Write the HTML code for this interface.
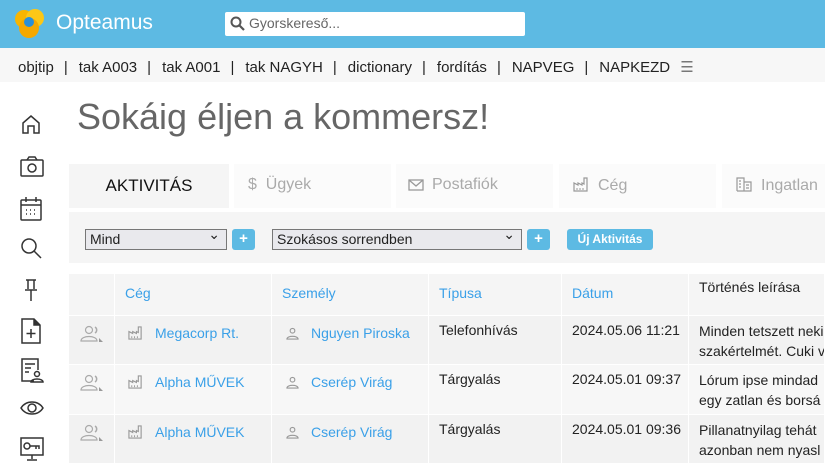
<!DOCTYPE html>
<html><head><meta charset="utf-8"><style>
*{box-sizing:border-box;margin:0;padding:0}
body{width:825px;height:464px;overflow:hidden;background:#fff;font-family:"Liberation Sans",sans-serif;color:#222;position:relative}
.hdr{position:absolute;left:0;top:0;width:825px;height:48px;background:#5dbae3}
.logo{position:absolute;left:12px;top:6px}
.brand{position:absolute;left:56px;top:11px;color:#fff;font-size:21px}
.search{position:absolute;left:225px;top:12px;width:300px;height:24px;background:#fff;border-radius:2px;font-size:14px;color:#666;padding:3px 0 0 24px}
.nav{position:absolute;left:0;top:48px;width:825px;height:34px;background:#f7f7f7;font-size:15px;color:#222;padding:10px 0 0 18px;white-space:nowrap}
.nav span.s{margin:0 11px 0 10px}
.side svg{position:absolute;left:20px}
h1{position:absolute;left:77px;top:96px;font-weight:normal;font-size:36px;color:#666}
.tab{position:absolute;top:164px;height:44px;font-size:16px;color:#aaa;padding-top:12px;background:#fbfbfb}
.fbar{position:absolute;left:69px;top:212px;width:756px;height:51px;background:#f5f5f5}
.sel{position:absolute;top:229px;height:21px;border:1px solid #777;background:#e9e9ed;font-size:14px;padding:1px 0 0 4px}
.sel:after{content:"⌄";position:absolute;right:6px;top:-4px;font-size:14px}
.plus{position:absolute;top:229px;width:23px;height:21px;background:#5dbae3;border-radius:3px;color:#fff;text-align:center;font-size:15px;font-weight:bold;line-height:20px}
.btn{position:absolute;left:567px;top:229px;width:86px;height:21px;background:#5dbae3;border-radius:3px;color:#fff;font-size:12px;font-weight:bold;text-align:center;line-height:21px}
.cell{position:absolute;font-size:14px;border-right:1px solid #fff;border-bottom:1px solid #fff;padding-left:10px}
.blue{color:#3aa0e8}
.d{line-height:20px;white-space:nowrap;overflow:hidden;padding-top:5px}
.ic{display:inline-block;vertical-align:-2px;margin-right:12px}
</style></head><body>
<svg width="0" height="0" style="position:absolute"><defs>
<symbol id="fac" viewBox="0 0 16 16"><path d="M1 15V7L5 9V7L9 9V7L11 8V2H14V15Z" fill="none" stroke="#999" stroke-width="1.2"/><path d="M4 12V14M7 12V14M10 12V14" stroke="#999"/></symbol>
<symbol id="per" viewBox="0 0 14 14"><circle cx="7" cy="4" r="2.5" fill="none" stroke="#999" stroke-width="1.2"/><path d="M1 13C1 9 13 9 13 13Z" fill="none" stroke="#999" stroke-width="1.2"/></symbol>
<symbol id="grp" viewBox="0 0 24 18"><circle cx="9" cy="5" r="3.5" fill="none" stroke="#aaa" stroke-width="1.2"/><path d="M15 2A3.5 3.5 0 0 1 15 8" fill="none" stroke="#aaa" stroke-width="1.5"/><path d="M1 16C1 10 17 10 17 16Z" fill="none" stroke="#aaa" stroke-width="1.2"/><path d="M19 13L23 17H19Z" fill="#999"/></symbol>
</defs></svg>
<div class="hdr">
<svg class="logo" width="36" height="36" viewBox="0 0 36 36"><circle cx="12" cy="13" r="9" fill="#f7b500"/><circle cx="23" cy="12" r="9" fill="#fcc716"/><circle cx="17" cy="22" r="10" fill="#f5a800"/><circle cx="17" cy="16" r="5" fill="#2a8fd8"/></svg>
<div class="brand">Opteamus</div>
<div class="search"><svg style="position:absolute;left:5px;top:4px" width="15" height="15" viewBox="0 0 15 15"><circle cx="6" cy="6" r="4.5" fill="none" stroke="#555" stroke-width="2"/><path d="M9.5 9.5L14 14" stroke="#555" stroke-width="2.2"/></svg>Gyorskereső...</div>
</div>
<div class="nav">objtip<span class="s">|</span>tak A003<span class="s">|</span>tak A001<span class="s">|</span>tak NAGYH<span class="s">|</span>dictionary<span class="s">|</span>fordítás<span class="s">|</span>NAPVEG<span class="s">|</span>NAPKEZD <span style="margin-left:6px;color:#777">☰</span></div>
<div class="side">
<svg style="top:113px" width="22" height="22" viewBox="0 0 22 22" fill="none" stroke="#333" stroke-width="1.5"><path d="M3 10L11 3L19 10V20H14V13H8V20H3Z"/></svg>
<svg style="top:156px" width="24" height="22" viewBox="0 0 24 22" fill="none" stroke="#333" stroke-width="1.5"><rect x="1" y="4" width="22" height="16" rx="1"/><path d="M7 4L9 1H15L17 4"/><circle cx="12" cy="12" r="4"/></svg>
<svg style="top:197px" width="22" height="24" viewBox="0 0 22 24" fill="none" stroke="#333" stroke-width="1.5"><rect x="1" y="3" width="20" height="20" rx="1"/><path d="M1 8H21M6 0V5M16 0V5M6 13h1M10 13h1M14 13h1M6 17h1M10 17h1M14 17h1"/></svg>
<svg style="top:237px" width="22" height="24" viewBox="0 0 22 24" fill="none" stroke="#333" stroke-width="1.5"><circle cx="9" cy="9" r="7"/><path d="M14 14L21 21"/></svg>
<svg style="top:278px" width="22" height="24" viewBox="0 0 22 24" fill="none" stroke="#333" stroke-width="1.5"><path d="M6 2H16M8 2V11M14 2V11M5 12H17M11 12V23"/></svg>
<svg style="top:318px" width="22" height="26" viewBox="0 0 22 26" fill="none" stroke="#333" stroke-width="1.5"><path d="M2 1H14L20 7V25H2Z"/><path d="M14 1V7H20" fill="#333"/><path d="M11 11V20M6.5 15.5H15.5"/></svg>
<svg style="top:358px" width="24" height="26" viewBox="0 0 24 26" fill="none" stroke="#333" stroke-width="1.5"><path d="M14 23H2V1H18V12"/><path d="M5 6H15M5 10H11M5 14H9"/><circle cx="17" cy="16" r="2.5"/><path d="M11 24C11 20 23 20 23 24Z"/></svg>
<svg style="top:398px" width="24" height="20" viewBox="0 0 24 20" fill="none" stroke="#333" stroke-width="1.5"><path d="M1 10C6 2 18 2 23 10C18 18 6 18 1 10Z"/><circle cx="12" cy="10" r="4"/></svg>
<svg style="top:437px" width="24" height="26" viewBox="0 0 24 26" fill="none" stroke="#333" stroke-width="1.5"><rect x="1" y="1" width="22" height="17"/><circle cx="7" cy="9" r="3"/><path d="M10 9H19V12M16 9V12M12 18V22M7 23H17"/></svg>
</div>
<h1>Sokáig éljen a kommersz!</h1>
<div class="tab" style="left:69px;width:160px;background:#f5f5f5;color:#111;text-align:center;font-size:17px">AKTIVITÁS</div>
<div class="tab" style="left:234px;width:157px;padding-left:14px">$&nbsp;&nbsp;Ügyek</div>
<div class="tab" style="left:396px;width:157px;padding-left:12px"><svg class="ic" style="margin-right:8px" width="16" height="12" viewBox="0 0 16 12" fill="none" stroke="#999" stroke-width="1.3"><rect x="1" y="1" width="14" height="10"/><path d="M1 1L8 7L15 1"/></svg>Postafiók</div>
<div class="tab" style="left:559px;width:157px;padding-left:14px"><svg class="ic" style="margin-right:9px" width="16" height="16"><use href="#fac"/></svg>Cég</div>
<div class="tab" style="left:722px;width:103px;padding-left:14px"><svg class="ic" style="margin-right:9px" width="16" height="16" viewBox="0 0 16 16" fill="none" stroke="#999" stroke-width="1.2"><path d="M1 15V2H8V15M8 6H15V15H1M3 5h2M3 8h2M3 11h2M10 9h3M10 12h3"/></svg>Ingatlan</div>
<div class="fbar"></div>
<div class="sel" style="left:85px;width:142px">Mind</div>
<div class="plus" style="left:232px">+</div>
<div class="sel" style="left:272px;width:250px">Szokásos sorrendben</div>
<div class="plus" style="left:527px">+</div>
<div class="btn">Új Aktivitás</div>

<div class="cell" style="left:69px;top:274px;width:46px;height:42px;background:#f5f5f5"></div>
<div class="cell blue" style="left:115px;top:274px;width:157px;height:42px;background:#f5f5f5;padding-top:11px">Cég</div>
<div class="cell blue" style="left:272px;top:274px;width:157px;height:42px;background:#f5f5f5;padding-top:11px">Személy</div>
<div class="cell blue" style="left:429px;top:274px;width:133px;height:42px;background:#f5f5f5;padding-top:11px">Típusa</div>
<div class="cell blue" style="left:562px;top:274px;width:127px;height:42px;background:#f5f5f5;padding-top:11px">Dátum</div>
<div class="cell" style="left:689px;top:274px;width:136px;height:42px;background:#f5f5f5;padding-top:5px">Történés leírása</div>

<div class="cell" style="left:69px;top:316px;width:46px;height:49px;background:#f2f2f2;padding:9px 0 0 11px"><svg width="24" height="18"><use href="#grp"/></svg></div>
<div class="cell blue" style="left:115px;top:316px;width:157px;height:49px;background:#f2f2f2;padding:9px 0 0 13px"><svg class="ic" width="15" height="15"><use href="#fac"/></svg>Megacorp Rt.</div>
<div class="cell blue" style="left:272px;top:316px;width:157px;height:49px;background:#f2f2f2;padding:9px 0 0 14px"><svg class="ic" width="13" height="13"><use href="#per"/></svg>Nguyen Piroska</div>
<div class="cell" style="left:429px;top:316px;width:133px;height:49px;background:#f2f2f2;padding-top:6px">Telefonhívás</div>
<div class="cell" style="left:562px;top:316px;width:127px;height:49px;background:#f2f2f2;padding-top:6px">2024.05.06 11:21</div>
<div class="cell d" style="left:689px;top:316px;width:136px;height:49px;background:#f2f2f2">Minden tetszett neki<br>szakértelmét. Cuki v</div>

<div class="cell" style="left:69px;top:365px;width:46px;height:50px;background:#f7f7f7;padding:9px 0 0 11px"><svg width="24" height="18"><use href="#grp"/></svg></div>
<div class="cell blue" style="left:115px;top:365px;width:157px;height:50px;background:#f7f7f7;padding:9px 0 0 13px"><svg class="ic" width="15" height="15"><use href="#fac"/></svg>Alpha MŰVEK</div>
<div class="cell blue" style="left:272px;top:365px;width:157px;height:50px;background:#f7f7f7;padding:9px 0 0 14px"><svg class="ic" width="13" height="13"><use href="#per"/></svg>Cserép Virág</div>
<div class="cell" style="left:429px;top:365px;width:133px;height:50px;background:#f7f7f7;padding-top:6px">Tárgyalás</div>
<div class="cell" style="left:562px;top:365px;width:127px;height:50px;background:#f7f7f7;padding-top:6px">2024.05.01 09:37</div>
<div class="cell d" style="left:689px;top:365px;width:136px;height:50px;background:#f7f7f7">Lórum ipse mindad<br>egy zatlan és borsá</div>

<div class="cell" style="left:69px;top:415px;width:46px;height:49px;background:#f2f2f2;padding:9px 0 0 11px"><svg width="24" height="18"><use href="#grp"/></svg></div>
<div class="cell blue" style="left:115px;top:415px;width:157px;height:49px;background:#f2f2f2;padding:9px 0 0 13px"><svg class="ic" width="15" height="15"><use href="#fac"/></svg>Alpha MŰVEK</div>
<div class="cell blue" style="left:272px;top:415px;width:157px;height:49px;background:#f2f2f2;padding:9px 0 0 14px"><svg class="ic" width="13" height="13"><use href="#per"/></svg>Cserép Virág</div>
<div class="cell" style="left:429px;top:415px;width:133px;height:49px;background:#f2f2f2;padding-top:6px">Tárgyalás</div>
<div class="cell" style="left:562px;top:415px;width:127px;height:49px;background:#f2f2f2;padding-top:6px">2024.05.01 09:36</div>
<div class="cell d" style="left:689px;top:415px;width:136px;height:49px;background:#f2f2f2">Pillanatnyilag tehát<br>azonban nem nyasl</div>
</body></html>
